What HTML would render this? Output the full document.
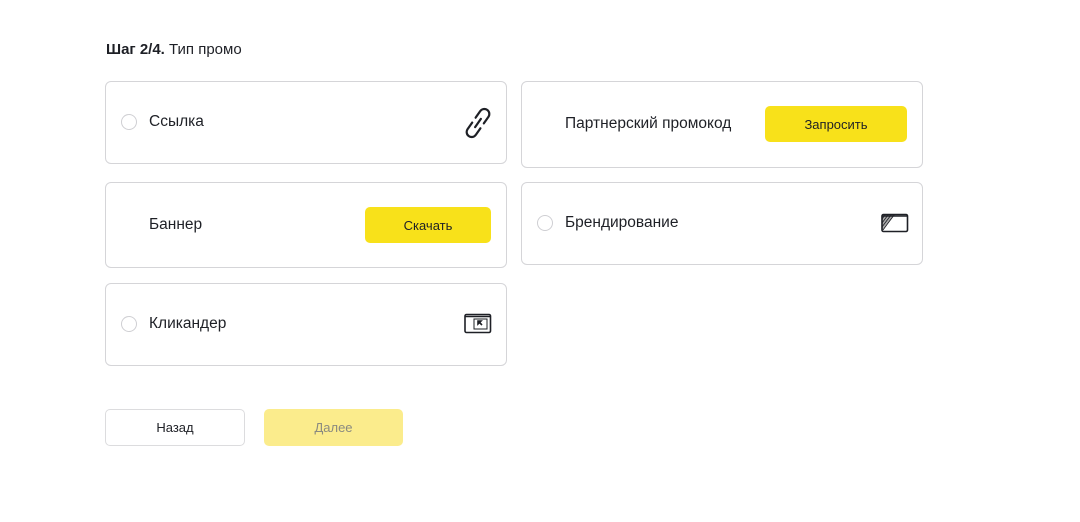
<!DOCTYPE html>
<html><head><meta charset="utf-8"><style>
*{box-sizing:border-box;margin:0;padding:0}
body{width:1080px;height:522px;background:#fff;font-family:"Liberation Sans",sans-serif;color:#1e2026;position:relative;overflow:hidden}
.h{position:absolute;left:106px;top:41px;font-size:15px}
.c{position:absolute;border:1px solid #d5d5d8;border-radius:6px;background:#fff}
.r{position:absolute;left:15px;width:16px;height:16px;border:1px solid #cfcfd3;border-radius:50%}
.t{position:absolute;font-size:15.5px;color:#1e2026}
.y{position:absolute;background:#f8e11a;border-radius:5px;font-size:13px;display:flex;align-items:center;justify-content:center;color:#1e2026}
.b{position:absolute;top:409px;height:37px;border-radius:5px;font-size:13px;display:flex;align-items:center;justify-content:center}
svg{position:absolute}
</style></head><body>
<div class="h"><b>Шаг 2/4.</b> Тип промо</div>

<div class="c" style="left:105px;top:81px;width:402px;height:83px">
<div class="r" style="top:32px"></div><div class="t" style="left:43px;top:31px">Ссылка</div>
<svg style="left:356px;top:22px" width="32" height="38" viewBox="0 0 32 38" fill="none" stroke="#1e2026" stroke-width="2.2" stroke-linecap="round">
<g transform="rotate(35 16 19)">
<path d="M11 16 V8 A5 5 0 0 1 21 8 V16"/><path d="M16 14 V24"/><path d="M11 22 V30 A5 5 0 0 0 21 30 V22"/></g></svg>
</div>

<div class="c" style="left:521px;top:81px;width:402px;height:87px">
<div class="t" style="left:43px;top:33px">Партнерский промокод</div>
<div class="y" style="left:243px;top:24px;width:142px;height:36px">Запросить</div>
</div>

<div class="c" style="left:105px;top:182px;width:402px;height:86px">
<div class="t" style="left:43px;top:33px">Баннер</div>
<div class="y" style="left:259px;top:24px;width:126px;height:36px">Скачать</div>
</div>

<div class="c" style="left:521px;top:182px;width:402px;height:83px">
<div class="r" style="top:32px"></div><div class="t" style="left:43px;top:31px">Брендирование</div>
<svg style="left:359px;top:30px" width="28" height="20" viewBox="0 0 28 20" fill="none" stroke="#1e2026">
<path d="M1 2 L14 2 L1 18Z" fill="#aaa" stroke="none"/>
<g stroke-width="0.8"><path d="M1 6 L4 2 M1 10 L7 2 M1 14 L10 2 M2 17 L13 2"/></g>
<rect x="1" y="1.5" width="25.5" height="17" rx="1.5" stroke-width="1.6"/><path d="M1 3 H26" stroke-width="1.5"/></svg>
</div>

<div class="c" style="left:105px;top:283px;width:402px;height:83px">
<div class="r" style="top:32px"></div><div class="t" style="left:43px;top:31px">Кликандер</div>
<svg style="left:358px;top:29px" width="28" height="22" viewBox="0 0 28 22" fill="none" stroke="#1e2026">
<rect x="1" y="1.5" width="25.5" height="18" rx="1.5" stroke-width="1.6"/><path d="M1 3.5 H26" stroke-width="1.5"/>
<rect x="10" y="6" width="13" height="10" stroke-width="1"/><path d="M14 8 L18 12 M14 8 L14 11 L17 8Z" stroke-width="1.6" fill="#1e2026"/></svg>
</div>

<div class="b" style="left:105px;width:140px;border:1px solid #dcdcde;color:#1e2026">Назад</div>
<div class="b" style="left:264px;width:139px;background:#fbec8c;color:#8a8a80">Далее</div>
</body></html>
